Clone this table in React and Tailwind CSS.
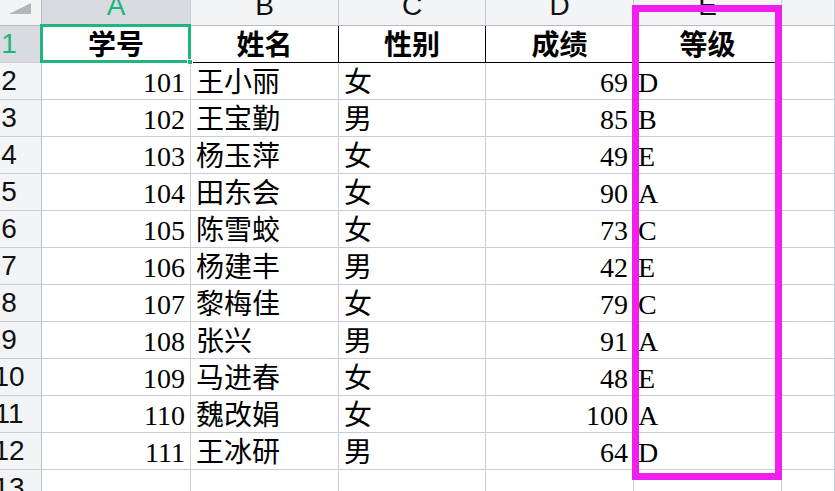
import React from "react";

const rows = [
  ["101", "王小丽", "女", "69", "D"],
  ["102", "王宝勤", "男", "85", "B"],
  ["103", "杨玉萍", "女", "49", "E"],
  ["104", "田东会", "女", "90", "A"],
  ["105", "陈雪蛟", "女", "73", "C"],
  ["106", "杨建丰", "男", "42", "E"],
  ["107", "黎梅佳", "女", "79", "C"],
  ["108", "张兴", "男", "91", "A"],
  ["109", "马进春", "女", "48", "E"],
  ["110", "魏改娟", "女", "100", "A"],
  ["111", "王冰研", "男", "64", "D"],
];

const cols = "grid grid-cols-[42px_149px_148px_147px_148px_148px_1fr]";
const serif = "font-['Liberation_Serif','Noto_Sans_CJK_SC',serif]";
const sans = "font-['Liberation_Sans',Arial,sans-serif]";

function RowNum({ n, active }) {
  return (
    <div
      className={`border-r border-b border-r-[#b9bdc6] border-b-[#c8cdd7] flex items-center ${
        active ? "bg-[#d8dbe0] text-[#1fb57b]" : "bg-[#f3f4f6] text-[#111]"
      }`}
    >
      <div className={`w-[18px] flex justify-center text-[28px] leading-[28px] ${sans}`}>
        <span className="whitespace-nowrap">{n}</span>
      </div>
    </div>
  );
}

function Cell({ children, align = "left", pad = "pl-[5px]" }) {
  return (
    <div
      className={`border-r border-b border-[#c8cdd7] flex items-end pb-[2px] overflow-hidden whitespace-nowrap text-[28px] leading-[28px] text-black ${serif} ${
        align === "right" ? "justify-end pr-[5px]" : pad
      }`}
    >
      {children}
    </div>
  );
}

function HeadCell({ children }) {
  return (
    <div
      className={`border-r border-b border-black flex items-center justify-center pt-[4px] font-bold text-[28px] leading-[28px] text-black ${serif}`}
    >
      {children}
    </div>
  );
}

export default function App() {
  return (
    <div className="relative w-[835px] h-[491px] overflow-hidden bg-white">
      {/* column letters */}
      <div className={`${cols} h-[26px]`}>
        <div className="bg-[#f3f4f6] border-r border-b border-r-[#b9bdc6] border-b-[#b4b9c3]">
          <svg width="41" height="25" className="block">
            <polygon points="31,3 31,14 9,14" fill="#b5b6b8" />
          </svg>
        </div>
        {["A", "B", "C", "D", "E", "F"].map((l, i) => (
          <div
            key={l}
            className={`border-r border-b border-r-[#c8ccd4] border-b-[#b4b9c3] flex justify-center items-start overflow-hidden ${
              i === 0 ? "bg-[#d8dbe0] text-[#1fb57b]" : "bg-[#f3f4f6] text-[#111]"
            }`}
          >
            {l !== "F" && (
              <span className={`-mt-[8px] text-[28px] leading-[28px] ${sans}`}>{l}</span>
            )}
          </div>
        ))}
      </div>

      {/* row 1 headers */}
      <div className={`${cols} h-[37px]`}>
        <RowNum n="1" active />
        <HeadCell>学号</HeadCell>
        <HeadCell>姓名</HeadCell>
        <HeadCell>性别</HeadCell>
        <HeadCell>成绩</HeadCell>
        <HeadCell>等级</HeadCell>
        <div className="border-r border-b border-[#c8cdd7]" />
      </div>

      {rows.map((r, i) => (
        <div key={r[0]} className={`${cols} h-[37px]`}>
          <RowNum n={i + 2} />
          <Cell align="right">{r[0]}</Cell>
          <Cell>{r[1]}</Cell>
          <Cell>{r[2]}</Cell>
          <Cell align="right">{r[3]}</Cell>
          <Cell pad="pl-[4px]">{r[4]}</Cell>
          <div className="border-r border-b border-[#c8cdd7]" />
        </div>
      ))}

      <div className={`${cols} h-[37px]`}>
        <RowNum n="13" />
        <Cell />
        <Cell />
        <Cell />
        <Cell />
        <Cell />
        <div className="border-r border-b border-[#c8cdd7]" />
      </div>

      {/* active cell selection */}
      <div className="absolute left-[40px] top-[24px] w-[151px] h-[39px] border-[3px] border-[#1fb57b]" />
      <div className="absolute left-[187px] top-[59px] w-[6px] h-[6px] bg-[#1fb57b] border border-white" />

      {/* highlight around column E */}
      <div className="absolute left-[632px] top-[5px] w-[150px] h-[475px] border-[7px] border-[#f01ff0]" />
    </div>
  );
}
